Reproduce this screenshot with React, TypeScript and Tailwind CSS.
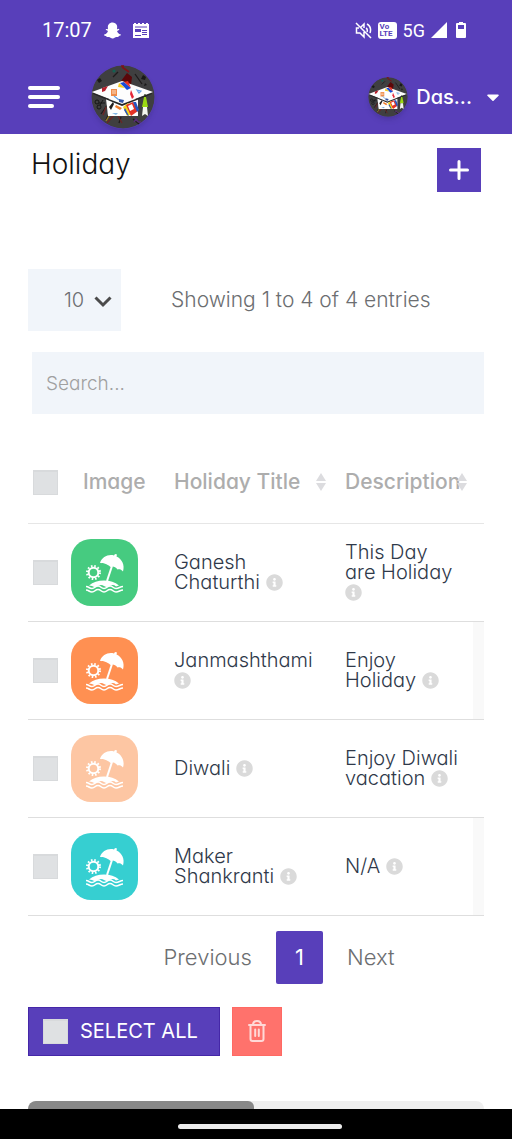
import { FaCaretDown, FaInfoCircle, FaSnapchatGhost } from "react-icons/fa";

function Logo({ className }: { className: string }) {
  return (
    <svg viewBox="0 0 64 64" className={className} role="img" aria-label="Graduation cap logo">
      <circle cx="32" cy="32" r="31.5" fill="#3f3f40" />
      <path d="M36 8l5 4-1 8-10-4z" fill="#5a0709" />
      <path d="M31 2l7 5M30 1l3 0" stroke="#7d1218" strokeWidth="1.6" />
      <path d="M44 9l7 10M22 12l5-5M10 49l7-10M19 46l-4 9M30 52l-2 6M42 54l6 5" stroke="#1e1b1b" strokeWidth="1.3" />
      <path d="M15 42l-3 8M23 50l-7 8M27 51l4 7" stroke="#6b2524" strokeWidth="1.4" />
      <path d="M18 51l-3 5" stroke="#9a7c1f" strokeWidth="1.4" />
      <circle cx="23" cy="6" r="1.6" fill="#126152" />
      <path d="M6 15l3-2 2 3-3 2zM52 10l3 2-1 3-4-1zM54 18l2 2-3 1z" fill="#191919" />
      <path d="M43 57l2-3 2 3M47 57h3" stroke="#572c75" strokeWidth="1.4" fill="none" />
      <g fill="none" stroke="#151515" strokeWidth="1">
        <circle cx="6" cy="37" r="2" />
        <circle cx="8" cy="42" r="2" />
        <path d="M8 38l6 0M9 40l3-5" />
      </g>
      <path d="M15 34h32v17H17z" fill="#fdfdfd" />
      <path d="M.8 27L31 16l31 11-31 12z" fill="#fdfdfd" />
      <path d="M2 28l29 11 30-11v1L31 41 2 29z" fill="#252525" />
      <path d="M11 23l6-2-3 5-3 1z" fill="#b6202d" />
      <path d="M29 18l4-1 7 6-4 2z" fill="#174bd8" />
      <path d="M33 17l4-1 3 7z" fill="#eb3021" />
      <path d="M28 18l6 5-7-1z" fill="#f6cc21" />
      <path d="M20 24h6v7h-6z" fill="#ef8c49" />
      <path d="M21 26h4M21 28h4" stroke="#fff" strokeWidth=".7" />
      <path d="M40 25l3 7-2 2-2-5z" fill="#e52739" />
      <path d="M46 25l4 1-2 2zM23 31l5 4" stroke="#68a4e2" strokeWidth="1.2" fill="none" />
      <path d="M28 34l5 1-1 3-4-1z" fill="#3657a5" />
      <path d="M25 40l6 3-2 2-5-3z" fill="#ef7c2c" />
      <path d="M18 42l4-5 1 2-3 6z" fill="#24201f" />
      <path d="M21 48l6 0-2 2z" fill="#83b7e6" />
      <path d="M32 42l5-4 4 11-5 2z" fill="#f4d41e" />
      <path d="M35 40l7-3 5 9-7 5z" fill="#e43226" />
      <path d="M37 41l4-2 2 5-4 2z" fill="#fff" />
      <path d="M33 45l3 5 2 1-4-8zM42 37l3 0 3 8-2 2z" fill="#2555bf" />
      <path d="M54 29v5" stroke="#263218" strokeWidth="1.2" />
      <path d="M53 32h2l2 10h-6z" fill="#9bd812" />
      <path d="M52 42h4l1 9-3-2-3 2z" fill="#f4f6ef" />
    </svg>
  );
}

function BeachIcon() {
  return (
    <svg viewBox="0 0 67 67" className="size-full" fill="none" aria-hidden="true">
      <path
        d="M29 24C31 18 37 15 43 16.5L44 15L46 15.5L45.5 17.5C51 20 54 26 52 32.5C50 30 48 30 46.500 30.500C44 27.500 42 27 39.500 28C36 24.500 32 24 29 24Z"
        fill="#fff"
      />
      <path d="M41 27l-5 15" stroke="#fff" strokeWidth="2" />
      <circle cx="22.500" cy="33.500" r="4.800" stroke="#fff" strokeWidth="2" />
      <circle cx="22.500" cy="33.500" r="6.500" stroke="#fff" strokeWidth="2" strokeDasharray="1.600 1.803" />
      <path d="M18 46.500C22 43 27 41.500 33 41.500S44 43 48 46.500L45 47.500Q42 45 39 47Q36 49 33 47Q30 45 27 47Q24 49 21 47Z" fill="#fff" />
      <path
        d="M15 47.500C18 47.500 18 49.500 21 49.500S24 47 27 47S30 49.500 33 49.500S36 47 39 47S42 49.500 45 49.500S49 47.500 52 47.500M15 51C18 51 18 53 21 53S24 50.500 27 50.500S30 53 33 53S36 50.500 39 50.500S42 53 45 53S49 51 52 51"
        stroke="#fff"
        strokeWidth="1.600"
      />
    </svg>
  );
}

function SortIcon() {
  return (
    <svg viewBox="0 0 10 18" className="h-[18px] w-[10px] shrink-0" fill="#dcdcdf" aria-hidden="true">
      <path d="M5 0l5 8H0zM0 10h10l-5 8z" />
    </svg>
  );
}

function Check({ label }: { label: string }) {
  return (
    <input
      type="checkbox"
      aria-label={label}
      className="block size-[25px] shrink-0 appearance-none border border-t-2 border-[#d8dadc] bg-[#dfe1e3]"
    />
  );
}

function StatusBar() {
  return (
    <div className="flex h-[60px] items-center justify-between pr-[46px] pl-[42px] font-['Roboto',sans-serif] font-normal">
      <div className="flex items-center gap-3">
        <span className="text-[20px]">17:07</span>
        <FaSnapchatGhost className="size-[17px]" />
        <svg viewBox="0 0 16 15" className="h-[15px] w-4" aria-hidden="true">
          <path d="M0 1h1V0h2v1h2V0h2v1h2V0h2v1h2V0h2v1h1v14H0z" fill="#fff" />
          <path d="M2 4h12M9 7.500h5M9 9.500h5M9 11.500h5" stroke="#583fba" fill="none" />
          <path d="M2 6h6v3H2z" fill="#583fba" />
          <path d="M2 12.500h6" stroke="#583fba" />
        </svg>
      </div>
      <div className="flex items-center gap-[6px]">
        <svg viewBox="0 0 17 17" className="size-[17px]" fill="none" stroke="#fff" strokeWidth="1.500" aria-hidden="true">
          <path d="M4 6H1.500v5H5l4 4v-5M6 5l3-3v4M11 6q2 1 1 4M12 2q5 3 3 9M1 1l15 15" />
        </svg>
        <span className="flex h-[17px] w-[19px] flex-col justify-center rounded-[3px] bg-white px-[2px] text-[8px] leading-[7px] font-bold text-[#583fba]">
          <span>Vo</span>
          <span>LTE</span>
        </span>
        <span className="text-[18px]">5G</span>
        <svg viewBox="0 0 16 16" className="size-4" fill="#fff" aria-hidden="true">
          <path d="M16 0v16H0z" />
        </svg>
        <svg viewBox="0 0 10 16" className="ml-[3px] h-4 w-[10px]" aria-hidden="true">
          <path d="M3 0h4v1h2q1 0 1 1v13q0 1-1 1H1q-1 0-1-1V2q0-1 1-1h2z" fill="#fff" />
          <path d="M2 3h6v4H2z" fill="#583fba" />
        </svg>
      </div>
    </div>
  );
}

const holidays = [
  { title: "Ganesh Chaturthi", description: "This Day are Holiday", tile: "bg-[#46cb80]", edge: "" },
  { title: "Janmashthami", description: "Enjoy Holiday", tile: "bg-[#ff9052]", edge: "bg-[#f9f9f9]" },
  { title: "Diwali", description: "Enjoy Diwali vacation", tile: "bg-[#fdc6a3]", edge: "" },
  { title: "Maker Shankranti", description: "N/A", tile: "bg-[#36cfd1]", edge: "bg-[#f9f9f9]" },
];

function Info() {
  return <FaInfoCircle className="inline size-[17px] align-[-2px] text-[#dadada]" />;
}

export default function App() {
  return (
    <div className="flex min-h-screen flex-col bg-white font-['Inter','Open_Sans',sans-serif] font-light [font-feature-settings:'cv11']">
      <header className="bg-[#583fba] text-white">
        <StatusBar />
        <div className="flex h-[74px] items-center pr-[11px] pl-7">
          <button type="button" aria-label="Open menu" className="flex w-8 flex-col gap-[5px]">
            <span className="h-1 w-8 rounded-full bg-white" />
            <span className="h-1 w-8 rounded-full bg-white" />
            <span className="h-1 w-[26px] rounded-full bg-white" />
          </button>
          <Logo className="ml-[31px] size-16 rounded-full shadow-md" />
          <button type="button" className="ml-auto flex items-center">
            <Logo className="size-10 rounded-full shadow-md" />
            <span className="ml-2 text-[20px] font-medium">Das...</span>
            <FaCaretDown className="ml-[13px] h-5 w-4" />
          </button>
        </div>
      </header>

      <main className="flex-1 px-7">
        <div className="flex items-start justify-between pt-[14px] pr-[3px] pl-[3px]">
          <h1 className="text-[28px] leading-8 text-[#111]">Holiday</h1>
          <button type="button" aria-label="Add holiday" className="flex size-[44px] items-center justify-center bg-[#583fba]">
            <svg viewBox="0 0 20 20" className="size-5" stroke="#fff" strokeWidth="3" strokeLinecap="round" aria-hidden="true">
              <path d="M10 1.500v17M1.500 10h17" />
            </svg>
          </button>
        </div>

        <div className="mt-[77px] flex items-center text-[21px] text-[#6c6e71]">
          <div className="relative">
            <select aria-label="Entries per page" className="h-[62px] w-[93px] appearance-none bg-[#f1f5fa] pl-9 text-[20px]">
              <option>10</option>
              <option>25</option>
              <option>50</option>
            </select>
            <svg viewBox="0 0 18 12" className="pointer-events-none absolute top-[27px] right-[9px] h-3 w-[18px]" fill="none" stroke="#4b4b4b" strokeWidth="3" aria-hidden="true">
              <path d="M1.500 1.500L9 9l7.500-7.500" />
            </svg>
          </div>
          <p className="ml-[50px]">Showing 1 to 4 of 4 entries</p>
        </div>

        <div className="mt-[21px] pl-1">
          <input
            type="search"
            aria-label="Search"
            placeholder="Search..."
            className="block h-[62px] w-full bg-[#f1f5fa] px-[14px] text-[19px] placeholder:text-[#a0a0a0]"
          />
        </div>

        <table className="mt-[26px] w-full table-fixed text-left text-[20px] leading-5 text-[#2f394a]">
          <colgroup>
            <col className="w-[43px]" />
            <col className="w-[103px]" />
            <col className="w-[171px]" />
            <col />
            <col className="w-[11px]" />
          </colgroup>
          <thead>
            <tr className="h-[83px] border-b border-[#e6e6e6] text-[21px] text-[#adadad]">
              <th className="p-0 pt-[2px] pl-[5px]">
                <Check label="Select every holiday" />
              </th>
              <th className="p-0 pt-[2px] pl-3 font-medium">Image</th>
              <th className="p-0 pt-[2px] font-medium">
                <span className="flex items-center justify-between pr-[19px]">
                  Holiday Title
                  <SortIcon />
                </span>
              </th>
              <th className="relative p-0 pt-[2px] font-medium">
                Description
                <span className="absolute top-[33px] right-[6px]">
                  <SortIcon />
                </span>
              </th>
              <th className="p-0" />
            </tr>
          </thead>
          <tbody>
            {holidays.map((h) => (
              <tr key={h.title} className="h-[98px] border-b border-[#dedede]">
                <td className="p-0 pl-[5px]">
                  <Check label={`Select ${h.title}`} />
                </td>
                <td className="p-0">
                  <div className={`size-[67px] rounded-[20px] ${h.tile}`}>
                    <BeachIcon />
                  </div>
                </td>
                <td className="p-0 pr-5">
                  {h.title} <Info />
                </td>
                <td className="p-0 pr-3">
                  {h.description} <Info />
                </td>
                <td className={`p-0 ${h.edge}`} />
              </tr>
            ))}
          </tbody>
        </table>

        <nav aria-label="Pages" className="mt-[15px] flex items-center justify-center gap-6 pl-[46px] text-[22px] text-[#6c6e71]">
          <button type="button">Previous</button>
          <button type="button" aria-current="page" className="h-[53px] w-[47px] rounded-[2px] bg-[#583fba] font-normal text-white">
            1
          </button>
          <button type="button">Next</button>
        </nav>

        <div className="mt-[23px] flex items-center gap-3">
          <label className="flex h-[49px] w-48 items-center gap-3 border border-[#4527a8] bg-[#583fba] pl-[14px] text-[20px] font-normal text-white">
            <Check label="Select all" />
            SELECT ALL
          </label>
          <button type="button" aria-label="Delete selected" className="flex h-[49px] w-[50px] items-center justify-center border border-[#ff6963] bg-[#ff726c]">
            <svg viewBox="0 0 18 22" className="h-[22px] w-[18px]" fill="none" stroke="#ffd9d7" strokeWidth="2" strokeLinecap="round" strokeLinejoin="round" aria-hidden="true">
              <path d="M1 5h16M5 5q0-4 4-4t4 4M2.500 5v14q0 2 2 2h9q2 0 2-2V5M7.200 9.500v6.500M10.800 9.500v6.500" />
            </svg>
          </button>
        </div>

        <div className="mt-[45px] h-2 overflow-hidden rounded-t-lg bg-[#efefef]">
          <div className="h-full w-[49.5%] rounded-t-md bg-[#888]" />
        </div>
      </main>

      <footer className="flex h-[30px] items-center justify-center bg-black pt-[5px] pl-2">
        <div className="h-[5px] w-[164px] rounded-full bg-[#ececec]" />
      </footer>
    </div>
  );
}
